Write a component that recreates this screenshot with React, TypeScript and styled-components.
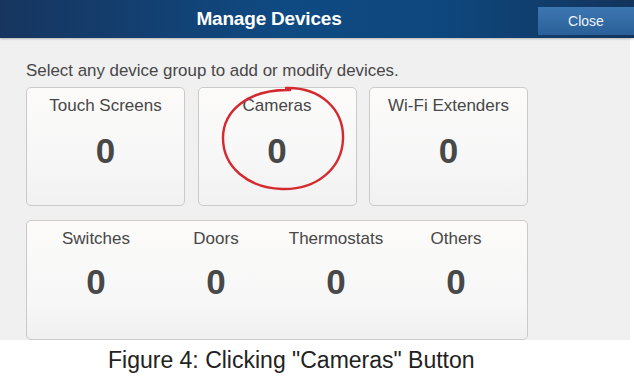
import { createGlobalStyle, styled } from 'styled-components';

const GlobalStyle = createGlobalStyle`
  html, body {
    margin: 0;
    padding: 0;
    background: #ffffff;
  }
  body {
    font-family: "Liberation Sans", Arial, sans-serif;
  }
`;

const topGroups = [
  { name: 'Touch Screens', count: 0 },
  { name: 'Cameras', count: 0, marked: true },
  { name: 'Wi-Fi Extenders', count: 0 },
];

const bottomGroups = [
  { name: 'Switches', count: 0 },
  { name: 'Doors', count: 0 },
  { name: 'Thermostats', count: 0 },
  { name: 'Others', count: 0 },
];

function App() {
  return (
    <Page>
      <GlobalStyle />
      <Header>
        <Title>Manage Devices</Title>
        <CloseButton>Close</CloseButton>
      </Header>

      <Panel>
        <Hint>Select any device group to add or modify devices.</Hint>
        <CardRow>
          {topGroups.map((g) => (
            <Card key={g.name}>
              <Label>{g.name}</Label>
              <Count>{g.count}</Count>
              {g.marked && (
                <Mark viewBox="0 0 126 108">
                  <path
                    d="M66 3 C100 2 124 24 123 54 C122 84 96 105 62 104 C28 103 3 82 3 53 C3 26 28 4 70 5"
                    fill="none"
                    stroke="#d42a2f"
                    strokeWidth="2.4"
                    strokeLinecap="round"
                  />
                </Mark>
              )}
            </Card>
          ))}
        </CardRow>

        <WideCard>
          {bottomGroups.map((g) => (
            <Column key={g.name}>
              <Label>{g.name}</Label>
              <Count $small>{g.count}</Count>
            </Column>
          ))}
        </WideCard>
      </Panel>

      <Caption>Figure 4: Clicking "Cameras" Button</Caption>
    </Page>
  );
}

export default App;

const Page = styled.div`
  width: 634px;
  height: 385px;
  overflow: hidden;
  display: flex;
  flex-direction: column;
`;

const Header = styled.header`
  display: flex;
  align-items: center;
  height: 38px;
  flex-shrink: 0;
  background: linear-gradient(90deg, #17355f 0%, #0f4a82 45%, #0e477d 70%, #13345c 100%);
  box-shadow: 0 1px 2px rgba(0, 0, 0, 0.25);
  position: relative;
  z-index: 1;
`;

const Title = styled.h1`
  flex: 1;
  margin: 0;
  text-align: center;
  color: #ffffff;
  font-size: 19px;
  font-weight: bold;
  letter-spacing: -0.2px;
`;

const CloseButton = styled.button`
  align-self: flex-start;
  width: 96px;
  height: 28px;
  margin-top: 7px;
  border: none;
  padding: 0;
  background: linear-gradient(180deg, #3c76b0 0%, #2a609a 100%);
  color: #eef3f8;
  font-family: "Liberation Sans", Arial, sans-serif;
  font-size: 14px;
`;

const Panel = styled.section`
  width: 604px;
  height: 278px;
  padding: 24px 0 0 26px;
  box-sizing: content-box;
  flex-shrink: 0;
  background: #f0f0f0;
  display: flex;
  flex-direction: column;
`;

const Hint = styled.p`
  margin: 0 0 7px;
  color: #474747;
  font-size: 16.9px;
  line-height: 18px;
`;

const CardRow = styled.div`
  display: flex;
  gap: 12.5px;
  margin-bottom: 14px;
`;

const Card = styled.div`
  position: relative;
  width: 159px;
  height: 119px;
  box-sizing: border-box;
  padding-top: 8px;
  border: 1px solid #cacaca;
  border-radius: 5px;
  background: linear-gradient(180deg, #fcfbfa 0%, #f7f7f7 60%, #f1f1f1 100%);
  display: flex;
  flex-direction: column;
  align-items: center;
`;

const WideCard = styled.div`
  width: 502px;
  height: 120px;
  box-sizing: border-box;
  padding: 8px 0 0 9px;
  border: 1px solid #cacaca;
  border-radius: 5px;
  background: linear-gradient(180deg, #fcfbfa 0%, #f7f7f7 70%, #f0f0f0 100%);
  display: flex;
`;

const Column = styled.div`
  width: 120px;
  display: flex;
  flex-direction: column;
  align-items: center;
`;

const Label = styled.div`
  color: #474747;
  font-size: 17px;
  line-height: 20px;
`;

const Count = styled.div<{ $small?: boolean }>`
  margin-top: ${(p) => (p.$small ? '13px' : '15px')};
  color: #484848;
  font-size: 35px;
  font-weight: bold;
  line-height: 40px;
`;

const Mark = styled.svg`
  position: absolute;
  left: 21px;
  top: -3px;
  width: 126px;
  height: 108px;
  overflow: visible;
`;

const Caption = styled.div`
  padding: 7px 0 0 108px;
  color: #222222;
  font-size: 23px;
  line-height: 26px;
`;
